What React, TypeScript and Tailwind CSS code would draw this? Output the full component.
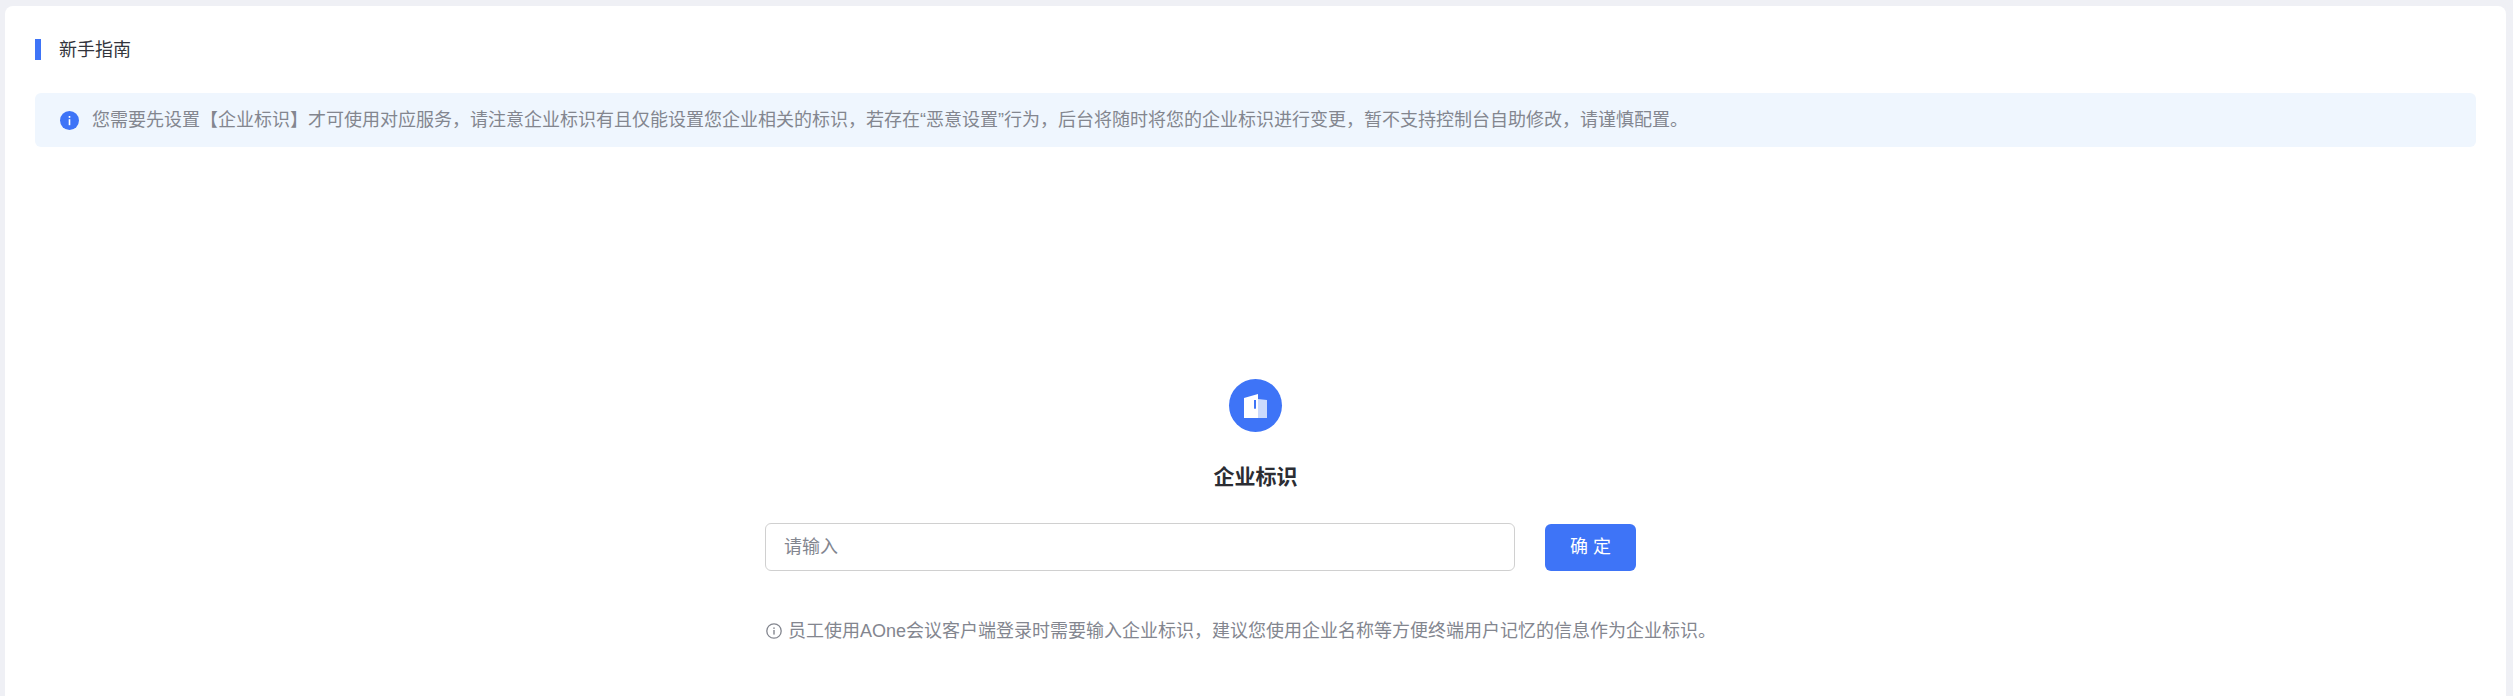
import React from "react";

function InfoFilled() {
  return (
    <svg width="19" height="19" viewBox="0 0 19 19" className="shrink-0">
      <circle cx="9.5" cy="9.5" r="9.5" fill="#3e74f7" />
      <rect x="8.7" y="8.2" width="1.6" height="6" fill="#fff" />
      <rect x="8.7" y="5" width="1.6" height="1.8" fill="#fff" />
    </svg>
  );
}

function InfoOutline() {
  return (
    <svg width="16" height="16" viewBox="0 0 16 16" className="shrink-0">
      <circle cx="8" cy="8" r="7.2" fill="none" stroke="#83868f" strokeWidth="1.3" />
      <rect x="7.3" y="7" width="1.4" height="4.6" fill="#83868f" />
      <rect x="7.3" y="4.4" width="1.4" height="1.5" fill="#83868f" />
    </svg>
  );
}

function BuildingIcon() {
  return (
    <div className="w-[53px] h-[53px] rounded-full bg-[#3e74f7] flex items-center justify-center">
      <svg width="53" height="53" viewBox="0 0 53 53">
        <path d="M15 19 L29 15 V39 H15 Z" fill="#ffffff" />
        <path d="M29 20 L38 21 V39 H29 Z" fill="#cbdafc" />
        <rect x="25" y="21" width="2" height="8.7" fill="#3e74f7" />
      </svg>
    </div>
  );
}

export default function App() {
  return (
    <div
      className="h-[696px] overflow-hidden bg-[#eff0f5] pt-[6px] pl-[5px] pr-[7px]"
      style={{ fontFamily: '"Liberation Sans", "Noto Sans CJK SC", sans-serif' }}
    >
      <div className="h-[720px] bg-white rounded-t-[8px] pt-[33px] px-[30px]">
        <div className="flex items-center h-[21px] border-l-[6px] border-[#3e74f7] pl-[18px] text-[18px] text-[#33353c]">
          <span className="pt-[2px]">新手指南</span>
        </div>
        <div className="mt-[33px] h-[54px] rounded-[6px] bg-[#eff6fe] flex items-center pl-[25px] text-[18px] text-[#83868f]">
          <InfoFilled />
          <span className="ml-[13px] whitespace-nowrap">
            您需要先设置【企业标识】才可使用对应服务，请注意企业标识有且仅能设置您企业相关的标识，若存在“恶意设置”行为，后台将随时将您的企业标识进行变更，暂不支持控制台自助修改，请谨慎配置。
          </span>
        </div>
        <div className="mt-[232px] flex flex-col items-center">
          <BuildingIcon />
          <div className="mt-[30px] text-[21px] leading-[30px] font-bold text-[#2b2d33]">企业标识</div>
          <div className="mt-[31px] w-[981px]">
            <div className="flex items-start">
              <input
                placeholder="请输入"
                className="w-[750px] h-[48px] rounded-[6px] border border-[#d0d0d0] px-[18px] text-[18px] outline-none placeholder:text-[#83868f]"
              />
              <button className="ml-[30px] mt-[1px] w-[91px] h-[47px] rounded-[6px] bg-[#3e74f7] text-white text-[18px]">
                确 定
              </button>
            </div>
            <div className="mt-[46px] flex items-center text-[18px] leading-[28px] text-[#83868f] pl-[1px]">
              <InfoOutline />
              <span className="ml-[6px] whitespace-nowrap">
                员工使用AOne会议客户端登录时需要输入企业标识，建议您使用企业名称等方便终端用户记忆的信息作为企业标识。
              </span>
            </div>
          </div>
        </div>
      </div>
    </div>
  );
}
